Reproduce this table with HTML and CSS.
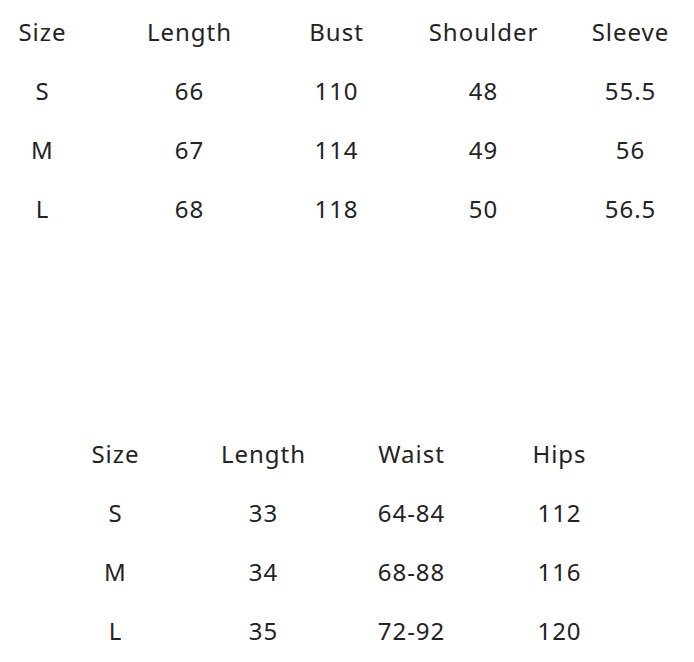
FILE: index.html
```html
<!DOCTYPE html>
<html>
<head>
<meta charset="utf-8">
<link rel="stylesheet" href="styles.css">
</head>
<body>
<div class="page">
  <div class="table table-top">
    <div class="cell">Size</div><div class="cell">Length</div><div class="cell">Bust</div><div class="cell">Shoulder</div><div class="cell">Sleeve</div>
    <div class="cell">S</div><div class="cell">66</div><div class="cell">110</div><div class="cell">48</div><div class="cell">55.5</div>
    <div class="cell">M</div><div class="cell">67</div><div class="cell">114</div><div class="cell">49</div><div class="cell">56</div>
    <div class="cell">L</div><div class="cell">68</div><div class="cell">118</div><div class="cell">50</div><div class="cell">56.5</div>
  </div>
  <div class="table table-bottom">
    <div class="cell">Size</div><div class="cell">Length</div><div class="cell">Waist</div><div class="cell">Hips</div>
    <div class="cell">S</div><div class="cell">33</div><div class="cell">64-84</div><div class="cell">112</div>
    <div class="cell">M</div><div class="cell">34</div><div class="cell">68-88</div><div class="cell">116</div>
    <div class="cell">L</div><div class="cell">35</div><div class="cell">72-92</div><div class="cell">120</div>
  </div>
</div>
</body>
</html>
```
FILE: styles.css
```css
html, body {
  margin: 0;
  padding: 0;
  background: #ffffff;
}
.page {
  width: 694px;
  height: 662px;
  padding-top: 2px;
  box-sizing: border-box;
  font-family: "Noto Sans", "Open Sans", sans-serif;
  font-size: 24px;
  letter-spacing: 1px;
  color: #232323;
}
.table {
  display: grid;
  grid-auto-rows: 59px;
  column-gap: 63px;
}
.table-top {
  grid-template-columns: repeat(5, 84px);
}
.table-bottom {
  grid-template-columns: repeat(4, 84px);
  column-gap: 64px;
  padding-left: 73px;
  margin-top: 186px;
}
.cell {
  display: flex;
  align-items: center;
  justify-content: center;
  white-space: nowrap;
  line-height: 1;
  padding-left: 1px;
}
```
